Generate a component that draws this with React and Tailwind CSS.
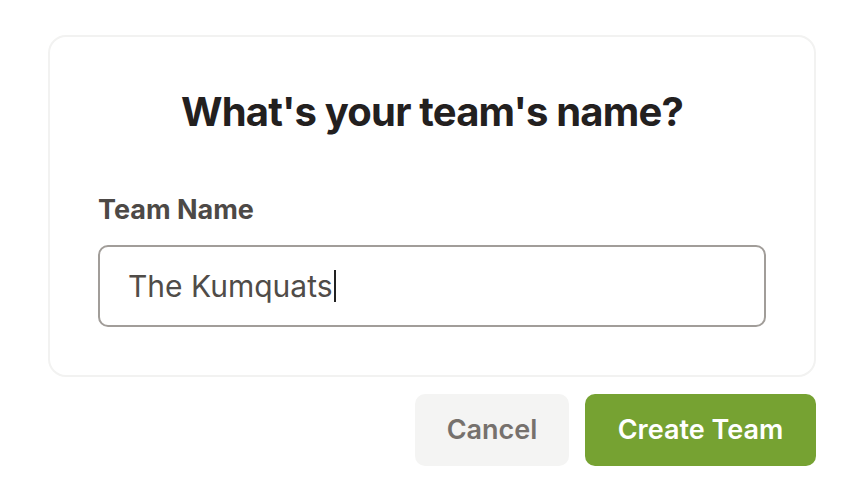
export default function App() {
  return (
    <div
      className="min-h-[504px] w-[864px] bg-white pt-[35px] pl-[48px]"
      style={{ fontFamily: "Inter, 'Noto Sans', sans-serif" }}
    >
      <div className="w-[768px]">
        {/* カード */}
        <div className="rounded-[18px] border-2 border-[#f2f2f1] px-[48px] pt-[51px] pb-[48px]">
          <h1 className="text-center text-[40px] leading-[48px] font-bold tracking-[-0.8px] text-[#23201f]">
            What's your team's name?
          </h1>
          <label className="mt-[58px] block text-[27px] leading-[32px] font-bold text-[#4d4946]">
            Team Name
          </label>
          <div className="mt-[19px] flex h-[82px] items-center rounded-[10px] border-2 border-[#a19d99] pl-[28px]">
            <span className="text-[30px] text-[#504c48]">The Kumquats</span>
            <span className="ml-[1px] h-[32px] w-[2px] bg-[#222]" />
          </div>
        </div>

        {/* アクション */}
        <div className="mt-[17px] flex justify-end gap-[16px]">
          <button className="h-[72px] w-[154px] rounded-[10px] bg-[#f4f4f3] text-[27px] font-semibold text-[#76716d]">
            Cancel
          </button>
          <button className="h-[72px] w-[231px] rounded-[10px] bg-[#76a232] text-[27px] font-semibold text-white">
            Create Team
          </button>
        </div>
      </div>
    </div>
  );
}
